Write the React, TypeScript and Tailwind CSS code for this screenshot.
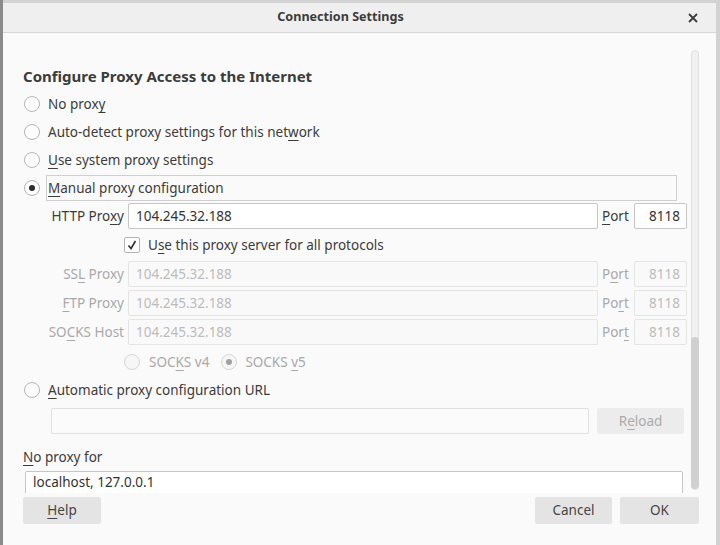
import type { ReactNode } from "react";

// letra com sublinhado de atalho (mnemonic)
function U({ children }: { children: ReactNode }) {
  return <span className="underline underline-offset-[3px] decoration-1">{children}</span>;
}

function Radio({ checked = false, disabled = false }: { checked?: boolean; disabled?: boolean }) {
  return (
    <span
      className={`flex h-[16px] w-[16px] shrink-0 items-center justify-center rounded-full border ${
        disabled ? "border-[#d6d6d6] bg-[#f6f6f6]" : "border-[#b4b4b4] bg-[#fdfdfd]"
      }`}
    >
      {checked && (
        <span className={`h-[6px] w-[6px] rounded-full ${disabled ? "bg-[#a0a0a0]" : "bg-[#2e2e2e]"}`} />
      )}
    </span>
  );
}

function Checkbox() {
  return (
    <span className="flex h-[16px] w-[16px] shrink-0 items-center justify-center rounded-[2px] border border-[#b4b4b4] bg-[#fdfdfd]">
      <svg width="12" height="12" viewBox="0 0 12 12">
        <path d="M2.5 6.5 L5 9.5 L9.5 2" fill="none" stroke="#2e2e2e" strokeWidth="1.6" />
      </svg>
    </span>
  );
}

function ProxyRow({
  label,
  port,
  disabled = false,
}: {
  label: ReactNode;
  port: ReactNode;
  disabled?: boolean;
}) {
  return (
    <div className="flex h-[26px] items-center">
      <div className={`w-[101px] text-right ${disabled ? "text-[#a9a9a9]" : "text-[#3c3c3c]"}`}>{label}</div>
      <div
        className={`ml-[4px] flex h-[26px] flex-1 items-center rounded-[2px] border px-[7px] ${
          disabled ? "border-[#e4e4e4] bg-[#f9f9f9] text-[#bcbcbc]" : "border-[#c6c6c6] bg-white text-[#333]"
        }`}
      >
        104.245.32.188
      </div>
      <div className={`mx-[4px] w-[28px] ${disabled ? "text-[#a9a9a9]" : "text-[#3c3c3c]"}`}>{port}</div>
      <div
        className={`flex h-[26px] w-[53px] items-center justify-end rounded-[2px] border px-[6px] ${
          disabled ? "border-[#e4e4e4] bg-[#f9f9f9] text-[#bcbcbc]" : "border-[#c6c6c6] bg-white text-[#333]"
        }`}
      >
        8118
      </div>
    </div>
  );
}

export default function App() {
  return (
    <div
      className="flex h-[545px] w-[720px] overflow-hidden bg-[#d2d2d2] text-[13.5px] text-[#3c3c3c]"
      style={{ fontFamily: '"Noto Sans", "Open Sans", sans-serif' }}
    >
      <div className="w-[3px] shrink-0 bg-[#8a8a8a]" />
      <div className="mr-[4px] mt-[3px] flex flex-1 flex-col bg-[#fafafa]">
        {/* barra de título */}
        <div className="flex h-[30px] shrink-0 items-center border-b border-[#d6d6d6] bg-[#efefef]">
          <div className="flex-1 text-center text-[12.6px] font-bold text-[#3c3c3c]">Connection Settings</div>
          <div className="flex w-[38px] justify-center pr-[8px]">
            <svg width="10" height="10" viewBox="0 0 10 10">
              <path d="M1 1 L9 9 M9 1 L1 9" stroke="#3c3c3c" strokeWidth="1.8" />
            </svg>
          </div>
        </div>

        <div className="flex flex-1">
          {/* área rolável */}
          <div className="flex flex-1 flex-col">
            <div className="h-[460px] shrink-0 overflow-hidden pl-[20px] pr-[1px]">
              <div className="mt-[33px] flex h-[20px] items-center text-[15px] font-bold text-[#3c3c3c]">
                Configure Proxy Access to the Internet
              </div>

              <div className="mt-[4px] flex h-[28px] items-center pl-[1px]">
                <Radio />
                <span className="ml-[8px]">
                  No prox<U>y</U>
                </span>
              </div>
              <div className="flex h-[28px] items-center pl-[1px]">
                <Radio />
                <span className="ml-[8px]">
                  Auto-detect proxy settings for this net<U>w</U>ork
                </span>
              </div>
              <div className="flex h-[28px] items-center pl-[1px]">
                <Radio />
                <span className="ml-[8px]">
                  <U>U</U>se system proxy settings
                </span>
              </div>
              <div className="flex h-[28px] items-center pl-[1px]">
                <Radio checked />
                <span className="ml-[6px] flex h-[26px] w-[631px] items-center border border-[#cfcfcf] px-[1px]">
                  <span>
                    <U>M</U>anual proxy configuration
                  </span>
                </span>
              </div>

              <div className="mt-[1px]">
                <ProxyRow
                  label={
                    <>
                      HTTP Pro<U>x</U>y
                    </>
                  }
                  port={
                    <>
                      <U>P</U>ort
                    </>
                  }
                />
              </div>

              <div className="mt-[3px] flex h-[26px] items-center pl-[101px]">
                <Checkbox />
                <span className="ml-[8px]">
                  U<U>s</U>e this proxy server for all protocols
                </span>
              </div>

              <div className="mt-[3px]">
                <ProxyRow
                  disabled
                  label={
                    <>
                      SS<U>L</U> Proxy
                    </>
                  }
                  port={
                    <>
                      P<U>o</U>rt
                    </>
                  }
                />
              </div>
              <div className="mt-[3px]">
                <ProxyRow
                  disabled
                  label={
                    <>
                      <U>F</U>TP Proxy
                    </>
                  }
                  port={
                    <>
                      Po<U>r</U>t
                    </>
                  }
                />
              </div>
              <div className="mt-[3px]">
                <ProxyRow
                  disabled
                  label={
                    <>
                      SO<U>C</U>KS Host
                    </>
                  }
                  port={
                    <>
                      Por<U>t</U>
                    </>
                  }
                />
              </div>

              <div className="mt-[3px] flex h-[28px] items-center pl-[101px] text-[#a9a9a9]">
                <Radio disabled />
                <span className="ml-[9px]">
                  SOC<U>K</U>S v4
                </span>
                <span className="ml-[12px]">
                  <Radio disabled checked />
                </span>
                <span className="ml-[8px]">
                  SOCKS <U>v</U>5
                </span>
              </div>

              <div className="flex h-[28px] items-center pl-[1px]">
                <Radio />
                <span className="ml-[8px]">
                  <U>A</U>utomatic proxy configuration URL
                </span>
              </div>

              <div className="mt-[4px] flex h-[26px] items-center">
                <div className="ml-[28px] h-[26px] w-[538px] rounded-[2px] border border-[#e0e0e0] bg-[#fbfbfb]" />
                <div className="ml-[8px] flex h-[26px] w-[87px] items-center justify-center rounded-[2px] bg-[#ececec] text-[#ababab]">
                  R<U>e</U>load
                </div>
              </div>

              <div className="mt-[13px] flex h-[20px] items-center">
                <span>
                  <U>N</U>o proxy for
                </span>
              </div>
              <div className="ml-[2px] mt-[4px] flex h-[30px] w-[658px] items-start rounded-[2px] border border-[#c6c6c6] bg-white px-[7px] pt-0 leading-[20px] text-[#333]">
                localhost, 127.0.0.1
              </div>
            </div>

            {/* botões */}
            <div className="flex items-center pl-[20px] pt-[4px]">
              <div className="flex h-[27px] w-[78px] items-center justify-center rounded-[2px] bg-[#e4e4e4] text-[#444]">
                <U>H</U>elp
              </div>
              <div className="flex-1" />
              <div className="flex h-[27px] w-[77px] items-center justify-center rounded-[2px] bg-[#e4e4e4] text-[#444]">
                Cancel
              </div>
              <div className="ml-[8px] mr-[-11px] flex h-[27px] w-[79px] items-center justify-center rounded-[2px] bg-[#e4e4e4] text-[#444]">
                OK
              </div>
            </div>
          </div>

          {/* barra de rolagem */}
          <div className="flex w-[28px] shrink-0 justify-start pl-[3px]">
            <div className="relative mt-[17px] h-[440px] w-[8px] rounded-full border border-[#e0e0e0] bg-[#f1f1f1]">
              <div className="absolute bottom-0 left-[-1px] right-[-1px] h-[152px] rounded-full bg-[#d0d0d0]" />
            </div>
          </div>
        </div>
      </div>
    </div>
  );
}
